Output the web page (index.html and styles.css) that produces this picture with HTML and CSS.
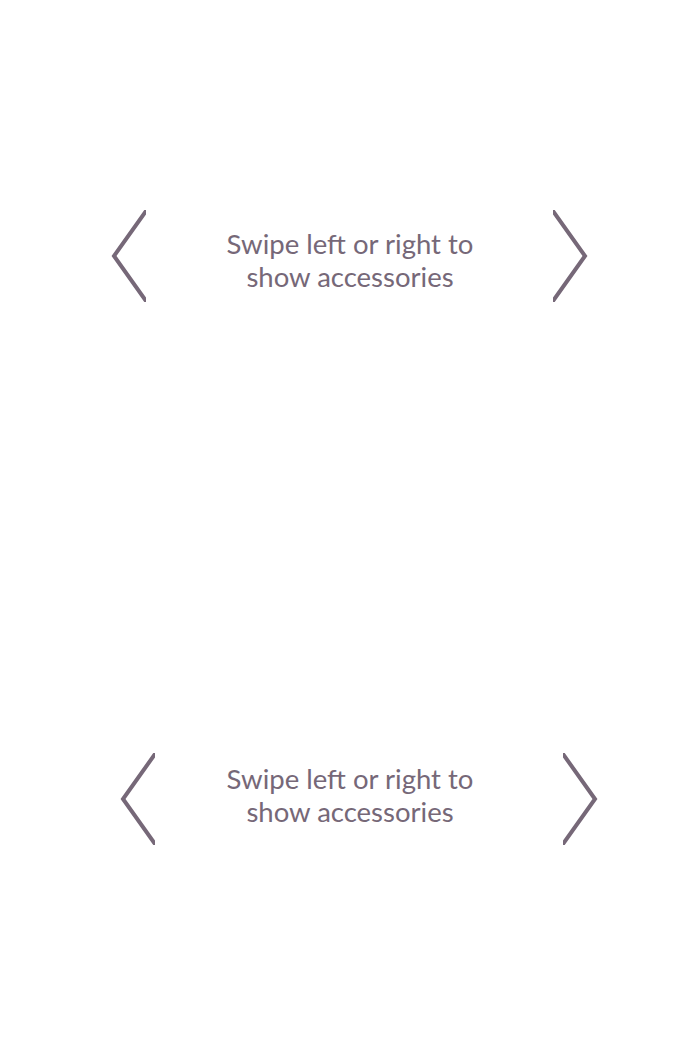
FILE: index.html
```html
<!DOCTYPE html>
<html lang="en">
<head>
<meta charset="utf-8">
<title>Accessories</title>
<link rel="stylesheet" href="styles.css">
</head>
<body>
<main class="page">
  <section class="swiper swiper-top">
    <svg class="chev chev-left" width="35" height="92" viewBox="0 0 35 92" aria-hidden="true"><polyline points="40,-6 3,46 40,98" /></svg>
    <p class="hint">Swipe left or right to<br>show accessories</p>
    <svg class="chev chev-right" width="35" height="92" viewBox="0 0 35 92" aria-hidden="true"><polyline points="-5,-6 32,46 -5,98" /></svg>
  </section>
  <section class="swiper swiper-bottom">
    <svg class="chev chev-left" width="35" height="92" viewBox="0 0 35 92" aria-hidden="true"><polyline points="40,-6 3,46 40,98" /></svg>
    <p class="hint">Swipe left or right to<br>show accessories</p>
    <svg class="chev chev-right" width="35" height="92" viewBox="0 0 35 92" aria-hidden="true"><polyline points="-5,-6 32,46 -5,98" /></svg>
  </section>
</main>
</body>
</html>
```
FILE: styles.css
```css
html, body {
  margin: 0;
  padding: 0;
  background: #ffffff;
}
.page {
  width: 700px;
  height: 1050px;
  padding-top: 210px;
  box-sizing: border-box;
  display: flex;
  flex-direction: column;
  gap: 451px;
}
.swiper {
  display: grid;
  grid-template-columns: 1fr auto 1fr;
  align-items: center;
  height: 92px;
}
.chev {
  display: block;
  overflow: hidden;
}
.chev polyline {
  fill: none;
  stroke: #766878;
  stroke-width: 4;
  stroke-linejoin: miter;
}
.chev-left { justify-self: start; }
.chev-right { justify-self: end; }
.swiper-top .chev-left { margin-left: 111px; }
.swiper-top .chev-right { margin-right: 112px; }
.swiper-bottom .chev-left { margin-left: 120px; }
.swiper-bottom .chev-right { margin-right: 102px; }
.hint {
  margin: 0;
  padding-top: 8px;
  font-family: "Lato", "Liberation Sans", sans-serif;
  font-size: 27.5px;
  line-height: 33px;
  color: #766878;
  text-align: center;
}
.swiper-bottom .hint {
  padding-top: 0;
  margin-top: -8px;
}
```
